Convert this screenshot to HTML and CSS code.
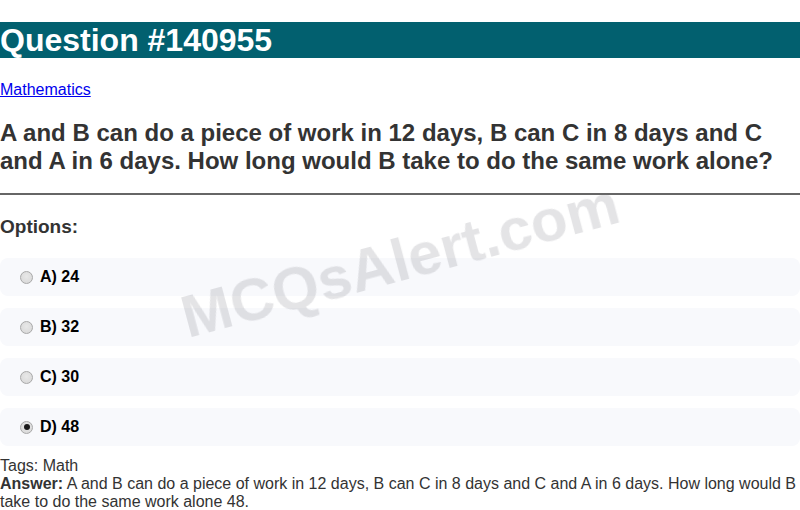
FILE: index.html
```html
<!DOCTYPE html>
<html>
<head>
<meta charset="utf-8">
<link rel="stylesheet" href="styles.css">
</head>
<body>
<h1 class="title">Question #140955</h1>
<p class="cat"><a href="#">Mathematics</a></p>
<h2 class="question">A and B can do a piece of work in 12 days, B can C in 8 days and C and A in 6 days. How long would B take to do the same work alone?</h2>
<hr class="rule">
<h3 class="opt-head">Options:</h3>
<div class="options">
  <label class="option"><span class="radio"></span><b>A) 24</b></label>
  <label class="option"><span class="radio"></span><b>B) 32</b></label>
  <label class="option"><span class="radio"></span><b>C) 30</b></label>
  <label class="option"><span class="radio checked"></span><b>D) 48</b></label>
</div>
<div class="meta">
  <div>Tags: Math</div>
  <div><b>Answer:</b> A and B can do a piece of work in 12 days, B can C in 8 days and C and A in 6 days. How long would B take to do the same work alone 48.</div>
</div>
<div class="watermark">MCQsAlert.com</div>
</body>
</html>
```
FILE: styles.css
```css
html, body {
  margin: 0;
  padding: 0;
  background: #fff;
  font-family: "Liberation Sans", Arial, sans-serif;
  color: #333;
}
.title {
  margin: 22px 0 0;
  background: #02606f;
  color: #fff;
  font-size: 32px;
  line-height: 36px;
  font-weight: bold;
}
.cat {
  margin: 23px 0 0;
  font-size: 16px;
  line-height: 18px;
}
.cat a {
  color: #0000ee;
}
.question {
  margin: 20px 0 0;
  font-size: 24px;
  line-height: 28px;
  font-weight: bold;
}
.rule {
  margin: 18px 0 0;
  border: 0;
  border-top: 2px solid #666;
  height: 0;
}
.opt-head {
  margin: 21px 0 0;
  font-size: 19px;
  line-height: 22px;
  font-weight: bold;
}
.options {
  margin-top: 20px;
  display: flex;
  flex-direction: column;
  gap: 12px;
}
.option {
  display: flex;
  align-items: center;
  background: #f8f9fc;
  border-radius: 8px;
  padding: 10px 15px;
  height: 18px;
  font-size: 16px;
  color: #000;
}
.radio {
  box-sizing: border-box;
  width: 13px;
  height: 13px;
  margin: 0 3px 0 5px;
  border-radius: 50%;
  border: 1px solid #a8a8a8;
  background: radial-gradient(circle at 50% 40%, #e8e8e8, #d6d6d6);
  display: flex;
  align-items: center;
  justify-content: center;
}
.radio.checked::after {
  content: "";
  width: 6px;
  height: 6px;
  border-radius: 50%;
  background: #1a1a1a;
}
.option b {
  margin-left: 4px;
}
.meta {
  margin-top: 11px;
  font-size: 16px;
  line-height: 18px;
}
.watermark {
  position: fixed;
  left: 50%;
  top: calc(50% + 5px);
  transform: translate(-50%, -50%) rotate(-15deg);
  font-size: 60px;
  font-weight: bold;
  color: rgba(120, 120, 128, 0.2);
  white-space: nowrap;
  pointer-events: none;
}
```
